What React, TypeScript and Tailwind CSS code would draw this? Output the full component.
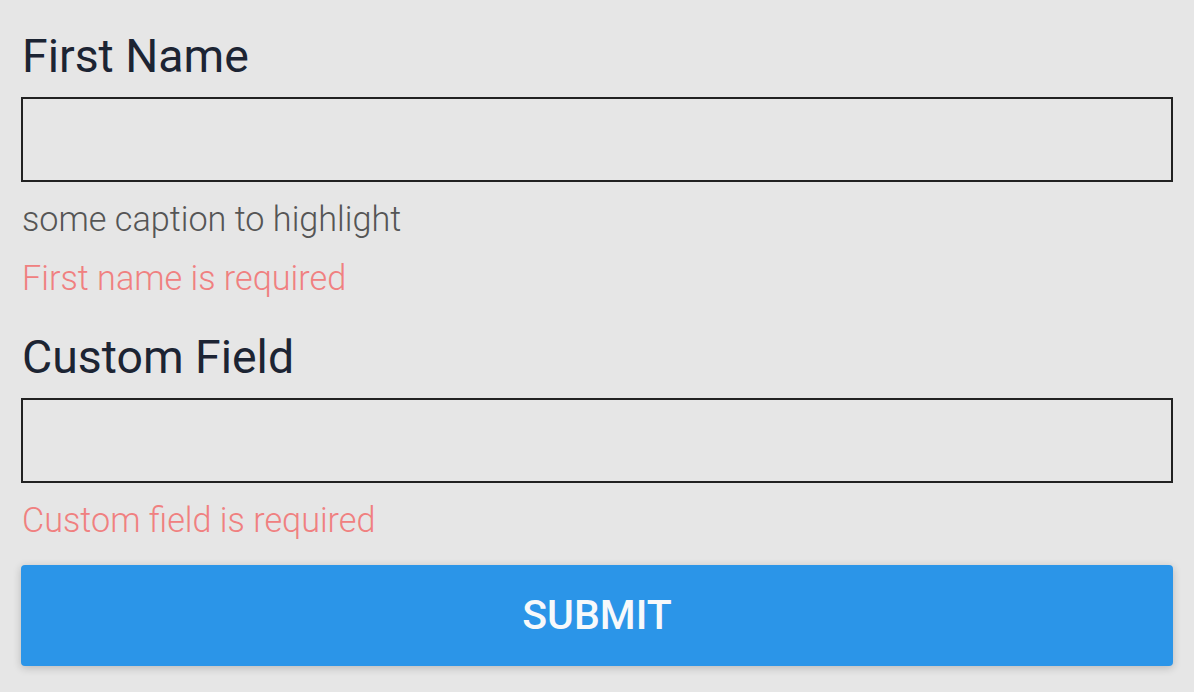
import React from "react";

export default function App() {
  return (
    <div
      className="w-[1194px] h-[692px] bg-[#e6e6e6] px-[21px] overflow-hidden"
      style={{ fontFamily: "Roboto, 'Noto Sans', sans-serif" }}
    >
      <div className="pt-[28px]">
        <label className="block pl-[1px] text-[46.4px] leading-[56px] text-[#1c2433]">First Name</label>
        <div className="mt-[13px] h-[85px] border-2 border-[#222222]"></div>
        <div className="mt-[15px] pl-[1px] text-[34.2px] leading-[44px] font-light text-[#555555]">
          some caption to highlight
        </div>
        <div className="mt-[15px] pl-[1px] text-[34.2px] leading-[44px] font-light text-[#f08080]">
          First name is required
        </div>
        <label className="mt-[29px] block pl-[1px] text-[46.4px] leading-[56px] text-[#1c2433]">Custom Field</label>
        <div className="mt-[13px] h-[85px] border-2 border-[#222222]"></div>
        <div className="mt-[15px] pl-[1px] text-[34.2px] leading-[44px] font-light text-[#f08080]">
          Custom field is required
        </div>
        <button className="mt-[23px] w-full h-[101px] rounded-[4px] bg-[#2b95e8] text-[#f7f9fb] text-[41px] font-medium shadow-[0_2px_8px_rgba(0,0,0,0.2)]">
          SUBMIT
        </button>
      </div>
    </div>
  );
}
